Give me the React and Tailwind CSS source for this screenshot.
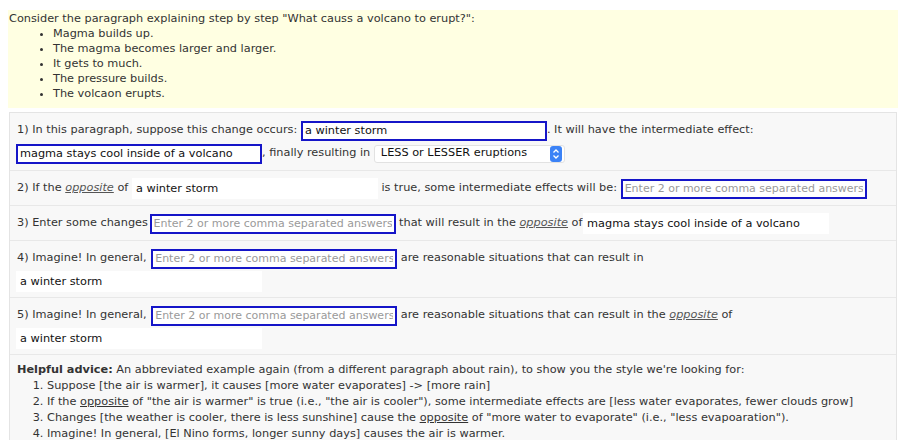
import React from "react";

const font = "font-['DejaVu_Sans','Verdana',sans-serif]";

function Opp() {
  return <span className="italic underline text-[#555]">opposite</span>;
}

function BlueInput({ value, className = "" }) {
  return (
    <input
      readOnly
      defaultValue={value}
      placeholder="Enter 2 or more comma separated answers"
      className={`h-[20px] w-[246px] border-2 border-[#1515c8] bg-white px-[2px] text-[11.3px] text-[#111] placeholder:text-[11px] placeholder:text-[#9a9a9a] outline-none ${font} ${className}`}
    />
  );
}

function PlainInput({ value, className = "" }) {
  return (
    <input
      readOnly
      defaultValue={value}
      className={`h-[21px] w-[246px] bg-white px-[4px] text-[11.3px] text-[#111] outline-none ${font} ${className}`}
    />
  );
}

function Select() {
  return (
    <div className="flex h-[18px] w-[191px] items-center justify-between rounded-[3px] border border-[#e2e2e2] bg-white pl-[6px] pr-[2px] text-[#111]">
      <span>LESS or LESSER eruptions</span>
      <svg width="12" height="16" viewBox="0 0 12 16">
        <rect x="0" y="0" width="12" height="16" rx="3" fill="#3b82f6" />
        <path d="M3.5 6.5 L6 4 L8.5 6.5" stroke="white" strokeWidth="1.3" fill="none" />
        <path d="M3.5 9.5 L6 12 L8.5 9.5" stroke="white" strokeWidth="1.3" fill="none" />
      </svg>
    </div>
  );
}

function Line({ children }) {
  return <div className="flex h-[23px] items-center whitespace-pre">{children}</div>;
}

export default function App() {
  return (
    <div className={`h-[440px] w-[905px] overflow-hidden bg-white text-[11.3px] text-[#333] ${font}`}>
      <div className="pl-[8px] pr-[7px] pt-[10px]">
        <div className="bg-[#ffffe2] pb-[7px] pl-[1px] pt-[1px] leading-[15px]">
          <div>Consider the paragraph explaining step by step "What causs a volcano to erupt?":</div>
          <ul className="list-disc pl-[44px]">
            <li>Magma builds up.</li>
            <li>The magma becomes larger and larger.</li>
            <li>It gets to much.</li>
            <li>The pressure builds.</li>
            <li>The volcaon erupts.</li>
          </ul>
        </div>

        <div className="mt-[4px] ml-[1px] mr-[1px] border border-[#e4e4e4] bg-[#f8f8f8]">
          <div className="border-b border-[#e8e8e8] px-[7px] pb-[5px] pt-[6px]">
            <Line>
              1) In this paragraph, suppose this change occurs: <BlueInput value="a winter storm" />. It will have the intermediate effect:
            </Line>
            <Line>
              <BlueInput value="magma stays cool inside of a volcano" className="ml-[-1px]" />, finally resulting in <Select />
            </Line>
          </div>

          <div className="border-b border-[#e8e8e8] px-[7px] pb-[5px] pt-[6px]">
            <Line>
              2) If the <Opp /> of <PlainInput value="a winter storm" /> is true, some intermediate effects will be: <BlueInput />
            </Line>
          </div>

          <div className="border-b border-[#e8e8e8] px-[7px] pb-[5px] pt-[6px]">
            <Line>
              3) Enter some changes <BlueInput className="ml-[-2px]" /> that will result in the <Opp /> of <PlainInput value="magma stays cool inside of a volcano" className="ml-[-3px]" />
            </Line>
          </div>

          <div className="border-b border-[#e8e8e8] px-[7px] pb-[4px] pt-[6px]">
            <Line>
              4) Imagine! In general, <BlueInput className="ml-[1px]" /> are reasonable situations that can result in
            </Line>
            <Line>
              <PlainInput value="a winter storm" className="ml-[-1px]" />
            </Line>
          </div>

          <div className="border-b border-[#e8e8e8] px-[7px] pb-[4px] pt-[6px]">
            <Line>
              5) Imagine! In general, <BlueInput className="ml-[1px]" /> are reasonable situations that can result in the <Opp /> of
            </Line>
            <Line>
              <PlainInput value="a winter storm" className="ml-[-1px]" />
            </Line>
          </div>

          <div className="px-[7px] pt-[7px] leading-[16px]">
            <div className="text-[11.3px]">
              <b>Helpful advice:</b> An abbreviated example again (from a different paragraph about rain), to show you the style we're looking for:
            </div>
            <ol className="list-decimal pl-[30px]">
              <li>Suppose [the air is warmer], it causes [more water evaporates] -&gt; [more rain]</li>
              <li>
                If the <span className="underline">opposite</span> of "the air is warmer" is true (i.e., "the air is cooler"), some intermediate effects are [less water evaporates, fewer clouds grow]
              </li>
              <li>
                Changes [the weather is cooler, there is less sunshine] cause the <span className="underline">opposite</span> of "more water to evaporate" (i.e., "less evapoaration").
              </li>
              <li>Imagine! In general, [El Nino forms, longer sunny days] causes the air is warmer.</li>
            </ol>
          </div>
        </div>
      </div>
    </div>
  );
}
